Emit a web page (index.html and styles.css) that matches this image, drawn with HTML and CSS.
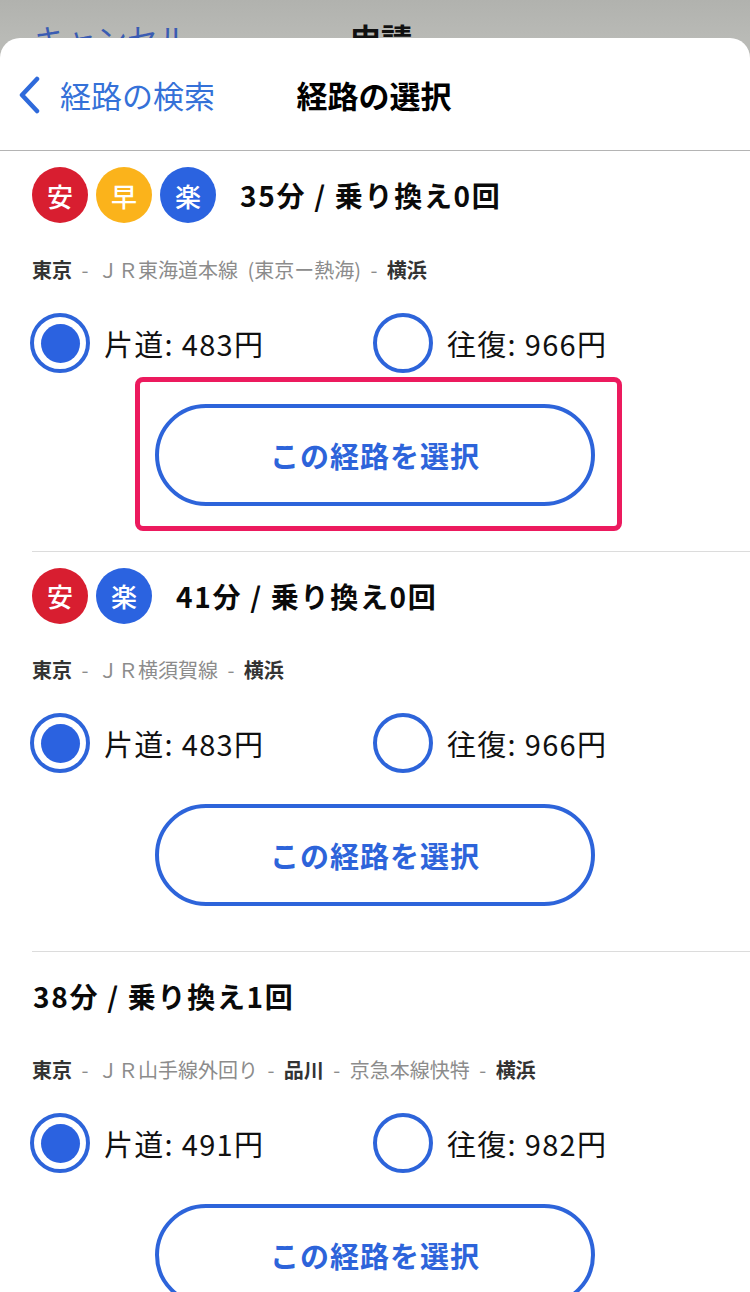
FILE: index.html
```html
<!DOCTYPE html>
<html lang="ja">
<head>
<meta charset="utf-8">
<title>経路の選択</title>
<link rel="stylesheet" href="styles.css">
</head>
<body>
<div class="screen">
  <div class="behind">
    <span class="behind-cancel">キャンセル</span>
    <span class="behind-title">申請</span>
  </div>
  <div class="sheet">
    <header class="nav">
      <a class="nav-back">
        <svg class="chev" width="24" height="38" viewBox="0 0 24 38"><path d="M20 3 L5 19 L20 35" fill="none" stroke="#2f6adb" stroke-width="4.5" stroke-linecap="round" stroke-linejoin="round"/></svg>
        <span>経路の検索</span>
      </a>
      <h1 class="nav-title">経路の選択</h1>
      <span></span>
    </header>

    <section class="route">
      <div class="route-head">
        <span class="badge red">安</span>
        <span class="badge yellow">早</span>
        <span class="badge blue">楽</span>
        <span class="route-title">35分 / 乗り換え0回</span>
      </div>
      <div class="route-path"><b>東京</b> - ＪＲ東海道本線 (東京ー熱海) - <b>横浜</b></div>
      <div class="fares">
        <label class="fare"><span class="radio on"></span><span>片道: 483円</span></label>
        <label class="fare"><span class="radio"></span><span>往復: 966円</span></label>
      </div>
      <div class="btn-wrap highlighted"><button class="select-btn">この経路を選択</button></div>
    </section>

    <section class="route">
      <div class="route-head">
        <span class="badge red">安</span>
        <span class="badge blue">楽</span>
        <span class="route-title">41分 / 乗り換え0回</span>
      </div>
      <div class="route-path"><b>東京</b> - ＪＲ横須賀線 - <b>横浜</b></div>
      <div class="fares">
        <label class="fare"><span class="radio on"></span><span>片道: 483円</span></label>
        <label class="fare"><span class="radio"></span><span>往復: 966円</span></label>
      </div>
      <div class="btn-wrap"><button class="select-btn">この経路を選択</button></div>
    </section>

    <section class="route">
      <div class="route-head">
        <span class="route-title plain">38分 / 乗り換え1回</span>
      </div>
      <div class="route-path"><b>東京</b> - ＪＲ山手線外回り - <b>品川</b> - 京急本線快特 - <b>横浜</b></div>
      <div class="fares">
        <label class="fare"><span class="radio on"></span><span>片道: 491円</span></label>
        <label class="fare"><span class="radio"></span><span>往復: 982円</span></label>
      </div>
      <div class="btn-wrap"><button class="select-btn">この経路を選択</button></div>
    </section>
  </div>
</div>
</body>
</html>
```

FILE: styles.css
```css
* { box-sizing: border-box; }
html, body {
  margin: 0;
  padding: 0;
}
body {
  width: 750px;
  height: 1292px;
  overflow: hidden;
  background: linear-gradient(#b1b2ae, #b9bab6 38px);
  font-family: "Noto Sans CJK JP", "Noto Sans", sans-serif;
  color: #111;
}
.screen {
  width: 750px;
  height: 1292px;
  overflow: hidden;
}
.behind {
  height: 38px;
  overflow: hidden;
  padding-top: 18px;
  display: flex;
  font-size: 31px;
  line-height: 40px;
}
.behind-cancel {
  margin-left: 34px;
  color: #3a5cb2;
}
.behind-title {
  margin-left: 161px;
  font-weight: 700;
  color: #111;
}
.sheet {
  background: #fff;
  border-radius: 20px 20px 0 0;
  height: 1254px;
}
.nav {
  height: 113px;
  border-bottom: 1.5px solid #b4b4b4;
  display: grid;
  grid-template-columns: 1fr auto 1fr;
  align-items: center;
}
.nav-back {
  display: flex;
  align-items: center;
  padding-left: 17px;
  color: #3571d8;
  font-size: 31px;
  line-height: 40px;
  gap: 19px;
  padding-top: 2px;
}
.chev { display: block; }
.nav-title {
  margin: 0;
  font-size: 31px;
  line-height: 40px;
  font-weight: 700;
  color: #000;
  padding-top: 2px;
  padding-right: 2px;
}
.route {
  padding-left: 32px;
}
.route + .route .route-head {
  border-top: 1.5px solid #dcdcdc;
}
.route-head {
  height: 88px;
  display: flex;
  align-items: center;
  gap: 8px;
}
.badge {
  width: 56px;
  height: 56px;
  border-radius: 50%;
  display: flex;
  align-items: center;
  justify-content: center;
  color: #fff;
  font-size: 26px;
  font-weight: 500;
}
.badge.red { background: #d81e30; }
.badge.yellow { background: #fbb31b; }
.badge.blue { background: #2b63e0; }
.route-title {
  margin-left: 16px;
  font-size: 28px;
  font-weight: 700;
  color: #0a0a0a;
  letter-spacing: 1.7px;
}
.route-title.plain { margin-left: 1px; }
.route-path {
  height: 60px;
  display: flex;
  align-items: center;
  font-size: 20px;
  word-spacing: 5px;
  color: #8c8c8c;
  white-space: pre;
}
.route-path b {
  color: #333;
  font-weight: 700;
}
.fares {
  height: 88px;
  margin-left: -2px;
  display: grid;
  grid-template-columns: 343px auto;
  align-items: center;
}
.fare {
  display: flex;
  align-items: center;
  gap: 14px;
  font-size: 29px;
  letter-spacing: 1.3px;
  color: #111;
}
.radio {
  width: 60px;
  height: 60px;
  border-radius: 50%;
  border: 4.5px solid #2d64da;
  display: flex;
  align-items: center;
  justify-content: center;
}
.radio.on::after {
  content: "";
  width: 39px;
  height: 39px;
  border-radius: 50%;
  background: #2b62e0;
}
.btn-wrap {
  display: flex;
  justify-content: center;
  padding: 17px 32px 45px 0;
}
.highlighted { position: relative; }
.select-btn {
  position: relative;
  width: 440px;
  height: 102px;
  border: 4px solid #2d64da;
  border-radius: 51px;
  background: #fff;
  color: #2d64da;
  font-family: "Noto Sans CJK JP", "Noto Sans", sans-serif;
  font-size: 29px;
  font-weight: 700;
  letter-spacing: 1px;
  padding: 0;
}
.highlighted .select-btn::after {
  content: "";
  position: absolute;
  top: -31px;
  left: -24px;
  right: -31px;
  bottom: -29px;
  border: 5.5px solid #ec1a5e;
  border-radius: 8px;
}
```
